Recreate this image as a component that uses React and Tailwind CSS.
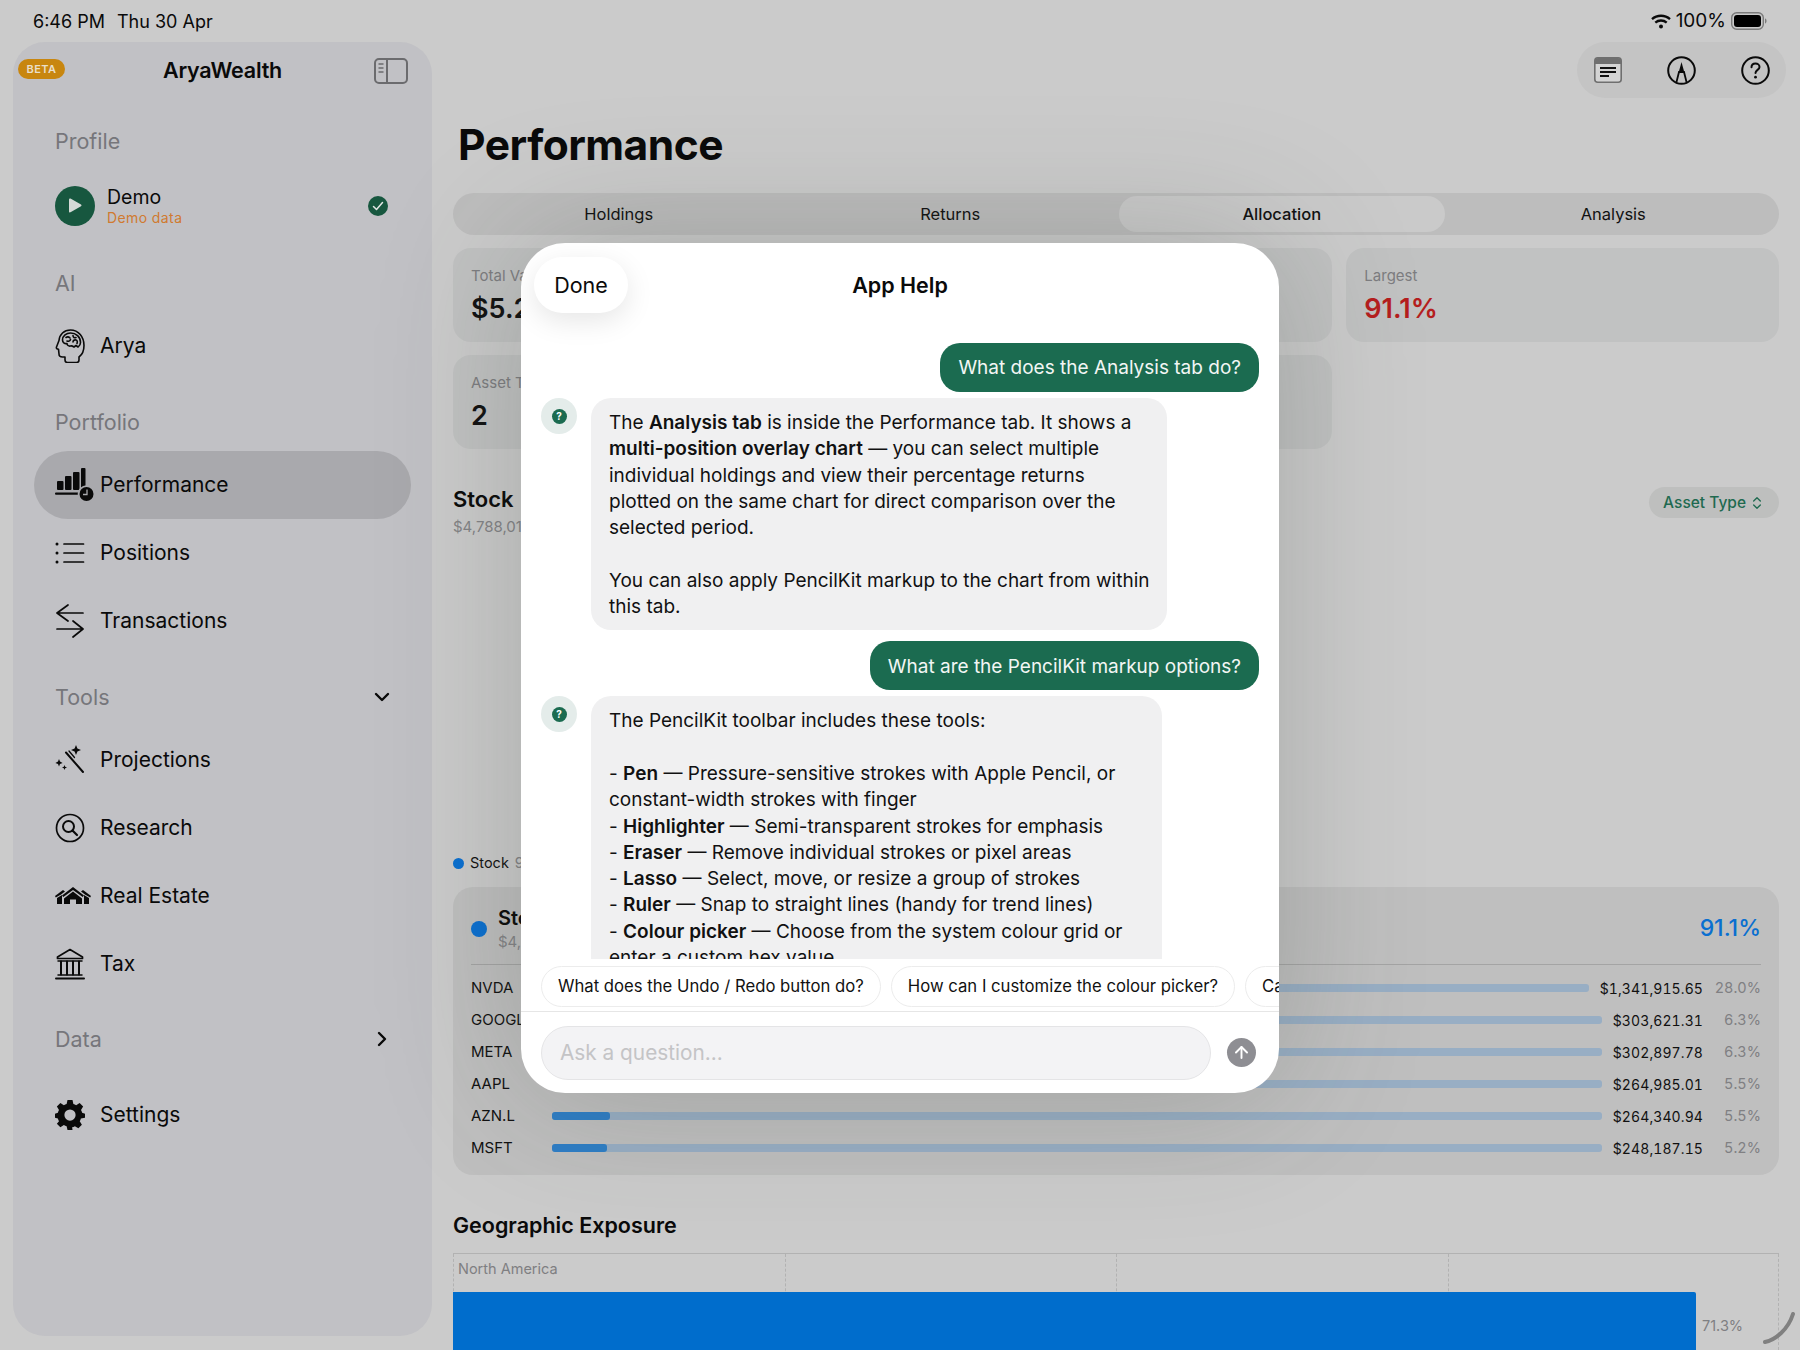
import React from 'react';
import { ArrowUp, ChevronDown, ChevronRight, ChevronsUpDown } from 'lucide-react';

const SidebarToggle = () => (
    <svg width="34" height="26" viewBox="0 0 34 26" fill="none" stroke="#6b6b6e" strokeWidth="2">
        <rect x="1" y="1" width="32" height="24" rx="4" />
        <path d="M13 1v24" />
        <path d="M4.5 6h5M4.5 10h5M4.5 14h5" strokeWidth="1.6" />
    </svg>
);

const HeadIcon = () => (
    <svg width="30" height="34" viewBox="0 0 30 34" fill="none" stroke="#0a0a0a" strokeWidth="1.6" strokeLinejoin="round" strokeLinecap="round">
        <path d="M24 28c3.500-2.500 5-6.500 5-11.500C29 8 23.500 1 15.500 1 9 1 4.500 5.500 4 11.500L1.500 18c-.5 1.500.5 2 2 2.200L4 25c0 2 1.500 3 3.500 3H10v3c0 1.500 1 2.500 2.500 2.500h9c1.500 0 2.500-1 2.500-2.500z" />
        <path d="M7.500 11c0-4.500 4-7 8-7 5.500 0 10 4 10 9.500 0 2-1 3.500-2.500 4.500l-2-1.500-2 1.500c-1.500-1-2-1.500-3.500-1-2 .5-3.500-1-3.500-2.500-2.500.5-4.500-1-4.500-3.500z" />
        <path d="M11 8.500c1.500-1 3-.5 4 .5M12 12c1.500.5 3 0 3.500-1.500M18 6.500c0 2 1.500 2.500 3 2M18 13c0-1.500 1.500-2.500 3-2 1.500.5 1.500 2 1 3.500" />
    </svg>
);

const PerformanceIcon = () => (
    <svg width="40" height="35" viewBox="0 0 40 35" fill="#0a0a0a">
        <rect x="2" y="13" width="6.500" height="9" rx="1" />
        <rect x="10" y="8" width="6.500" height="14" rx="1" />
        <rect x="18" y="4" width="6.500" height="18" rx="1" />
        <rect x="26" y="0" width="4.500" height="22" rx="1" />
        <rect x="0" y="24.500" width="24" height="2.200" rx="1" />
        <circle cx="31.500" cy="26" r="8.800" fill="#a9a9ad" />
        <circle cx="31.500" cy="26" r="7" />
        <path d="M32 21.500v5h-4" stroke="#a9a9ad" strokeWidth="1.300" fill="none" />
    </svg>
);

const ListIcon = () => (
    <svg width="30" height="22" viewBox="0 0 30 22" fill="none" stroke="#0a0a0a" strokeWidth="1.700" strokeLinecap="round">
        <path d="M9 2h19.500M9 11h19.500M9 20h19.500" />
        <circle cx="2" cy="2" r="1.500" fill="#0a0a0a" stroke="none" />
        <circle cx="2" cy="11" r="1.500" fill="#0a0a0a" stroke="none" />
        <circle cx="2" cy="20" r="1.500" fill="#0a0a0a" stroke="none" />
    </svg>
);

const TransferIcon = () => (
    <svg width="30" height="34" viewBox="0 0 30 34" fill="none" stroke="#0a0a0a" strokeWidth="1.700" strokeLinecap="round" strokeLinejoin="round">
        <path d="M28 9H2l11-8M2 9l11 8" />
        <path d="M2 25h26l-10-8M28 25l-10 8" />
    </svg>
);

const WandIcon = () => (
    <svg width="30" height="30" viewBox="0 0 30 30" fill="#0a0a0a">
        <path d="M21 0l1.400 3.600L26 5l-3.600 1.400L21 10l-1.400-3.600L16 5l3.600-1.400z" />
        <path d="M4 14l1 2.600L7.600 18 5 19l-1 2.600L3 19l-2.600-1L3 16.600z" />
        <path d="M9.500 20l.7 1.800 1.800.7-1.800.7-.7 1.800-.7-1.800-1.800-.7 1.800-.7z" />
        <path d="M11 7.500L28 27" stroke="#0a0a0a" strokeWidth="2" strokeLinecap="round" fill="none" />
        <path d="M14 6l5.500 6.500" stroke="#0a0a0a" strokeWidth="1.300" strokeLinecap="round" fill="none" />
    </svg>
);

const ResearchIcon = () => (
    <svg width="30" height="30" viewBox="0 0 30 30" fill="none" stroke="#0a0a0a" strokeWidth="1.700" strokeLinecap="round">
        <circle cx="15" cy="15" r="13.500" />
        <circle cx="13.500" cy="13.500" r="5.500" strokeWidth="2" />
        <path d="M17.500 17.500l4.500 4.500" strokeWidth="2.200" />
    </svg>
);

const HousesIcon = () => (
    <svg width="36" height="18" viewBox="0 0 36 18" fill="#0a0a0a">
        <path d="M18 0L7 8.500 8.300 10 18 3l9.700 7 1.300-1.500z" />
        <path d="M18 4.500L9 11.500V17h6v-4.500h6V17h6v-5.500z" />
        <path d="M8 3L0 9l.8 1.500L6 7.500 10 4.500z" />
        <path d="M28 3l8 6-.8 1.500L30 7.500 26 4.500z" />
        <path d="M2 11l5-3v9H2zM34 11l-5-3v9h5z" />
    </svg>
);

const BankIcon = () => (
    <svg width="30" height="32" viewBox="0 0 30 32" fill="none" stroke="#0a0a0a" strokeLinecap="round">
        <path d="M15 1.500L2.500 9v1.500h25V9z" strokeWidth="1.700" strokeLinejoin="round" />
        <path d="M3 13h24" strokeWidth="1.500" />
        <path d="M6 13.500v13M12 13.500v13M18 13.500v13M24 13.500v13" strokeWidth="2" />
        <path d="M3 27h24" strokeWidth="1.500" />
        <path d="M1 30.500h28" strokeWidth="2" />
    </svg>
);

const GearIcon = () => (
    <svg width="30" height="30" viewBox="0 0 24 24" fill="#0a0a0a" fillRule="evenodd">
        <path d="M10 0h4l.7 3.200c.8.200 1.500.5 2.200.9L19.700 2.400l2.800 2.800-1.700 2.800c.4.700.7 1.400.9 2.200L24 10.900v3.200l-3.300.7c-.2.800-.5 1.500-.9 2.200l1.700 2.800-2.800 2.800-2.800-1.700c-.7.400-1.400.7-2.200.9L14 24h-4l-.7-3.100c-.8-.2-1.500-.5-2.200-.9l-2.800 1.700-2.800-2.800L3.200 17c-.4-.7-.7-1.400-.9-2.200L0 14.100v-3.200l2.300-.7c.2-.8.5-1.500.9-2.200L1.500 5.200l2.800-2.800 2.800 1.700c.7-.4 1.400-.7 2.200-.9zM12 7.500a4.500 4.500 0 100 9 4.500 4.500 0 000-9z" />
    </svg>
);

const WifiIcon = () => (
    <svg width="20" height="15" viewBox="0 0 20 15" fill="none" stroke="#0a0a0a" strokeWidth="2.300">
        <path d="M1 5.200c5-4.600 13-4.600 18 0" />
        <path d="M4.300 8.600c3.200-2.800 8.200-2.800 11.400 0" />
        <circle cx="10" cy="12.500" r="2" fill="#0a0a0a" stroke="none" />
    </svg>
);

const BatteryIcon = () => (
    <svg width="36" height="18" viewBox="0 0 36 18">
        <rect x=".7" y=".7" width="31.600" height="16.600" rx="5" fill="none" stroke="#7b7b7b" strokeWidth="1.400" />
        <rect x="3" y="3" width="27" height="12" rx="3" fill="#000" />
        <path d="M34 6.500c1 .3 1.500 1.200 1.500 2.500s-.5 2.200-1.500 2.500z" fill="#7b7b7b" />
    </svg>
);

const NotesIcon = () => (
    <svg width="28" height="26" viewBox="0 0 28 26" fill="none">
        <rect x=".8" y=".8" width="26.400" height="24.400" rx="3" fill="#d4d4d4" stroke="#6f6f6f" strokeWidth="1.600" />
        <path d="M1 4a3 3 0 013-3h20a3 3 0 013 3v3H1z" fill="#6f6f6f" />
        <path d="M6 11h16M6 15h16M6 19h9" stroke="#111" strokeWidth="1.800" />
    </svg>
);

const MarkupIcon = () => (
    <svg width="29" height="29" viewBox="0 0 29 29" fill="none" stroke="#0a0a0a" strokeWidth="2">
        <circle cx="14.500" cy="14.500" r="13.300" />
        <path d="M9.500 26l2.500-10h5l2.500 10" strokeWidth="1.800" />
        <path d="M14.500 6l-3 11h6z" fill="#0a0a0a" stroke="none" />
    </svg>
);

const HelpIcon = () => (
    <svg width="29" height="29" viewBox="0 0 29 29" fill="none" stroke="#0a0a0a" strokeWidth="2" strokeLinecap="round">
        <circle cx="14.500" cy="14.500" r="13.300" />
        <path d="M10.500 11.200c0-2.300 1.800-3.700 4-3.700s4 1.400 4 3.400c0 3-4 3-4 6.200" />
        <circle cx="14.500" cy="21.200" r="1.400" fill="#0a0a0a" stroke="none" />
    </svg>
);

const Label = ({ className = '', children }) => (
    <div className={`h-[30px] pl-[42px] flex items-center text-[21.500px] text-[#76767b] ${className}`}>{children}</div>
);

const NavRow = ({ icon, label, active, className = '' }) => (
    <div className={`h-[68px] mx-[21px] pl-[21px] flex items-center rounded-full text-[21px] text-[#0a0a0a] ${active ? 'bg-[#a9a9ad]' : ''} ${className}`}>
        <div className="w-[45px] shrink-0 flex items-center">{icon}</div>
        {label}
    </div>
);

const Sidebar = () => (
    <aside className="w-[419px] shrink-0 mb-[14px] rounded-[32px] bg-[#c1c1c5]">
        <div className="h-[58px] grid grid-cols-[1fr_auto_1fr] items-center">
            <div className="flex">
                <span className="ml-[5px] mb-[4px] flex h-[20px] w-[47px] items-center justify-center rounded-full bg-[#c8860f] text-[11px] font-semibold tracking-[0.5px] text-[#eadfc9]">BETA</span>
            </div>
            <div className="pb-[1px] text-[21.500px] font-semibold text-[#0a0a0a] tracking-[-0.2px]">AryaWealth</div>
            <div className="flex justify-end pr-[24px]"><SidebarToggle /></div>
        </div>

        <Label className="mt-[26px]">Profile</Label>
        <div className="mt-[29px] pl-[42px] pr-[44px] flex items-center">
            <div className="w-[40px] h-[40px] rounded-full bg-[#17573f] flex items-center justify-center">
                <svg width="14" height="15" viewBox="0 0 14 15"><path d="M1 1.500c0-1 .8-1.300 1.500-.9l10.500 6c.7.400.7 1.300 0 1.700l-10.500 6c-.7.400-1.500 0-1.500-.9z" fill="#d5dad7" /></svg>
            </div>
            <div className="ml-[12px] flex-1">
                <div className="text-[19.500px] leading-[24px] text-[#0a0a0a]">Demo</div>
                <div className="text-[14px] leading-[17px] tracking-[0.4px] text-[#d07a30]">Demo data</div>
            </div>
            <div className="w-[20px] h-[20px] rounded-full bg-[#17573f] flex items-center justify-center">
                <svg width="12" height="10" viewBox="0 0 12 10" fill="none" stroke="#e2e6e4" strokeWidth="1.500" strokeLinecap="round" strokeLinejoin="round"><path d="M1.500 5.500L4.500 8.500 10.500 1.500" /></svg>
            </div>
        </div>

        <Label className="mt-[42px]">AI</Label>
        <NavRow className="mt-[14px]" icon={<HeadIcon />} label="Arya" />

        <Label className="mt-[27px]">Portfolio</Label>
        <NavRow className="mt-[14px]" icon={<PerformanceIcon />} label="Performance" active />
        <NavRow icon={<ListIcon />} label="Positions" />
        <NavRow icon={<TransferIcon />} label="Transactions" />

        <div className="mt-[27px] h-[30px] pl-[42px] pr-[38px] flex items-center justify-between text-[21.500px] text-[#76767b]">
            Tools
            <ChevronDown size={24} color="#0a0a0a" strokeWidth={2.4} />
        </div>
        <NavRow className="mt-[14px]" icon={<WandIcon />} label="Projections" />
        <NavRow icon={<ResearchIcon />} label="Research" />
        <NavRow icon={<HousesIcon />} label="Real Estate" />
        <NavRow icon={<BankIcon />} label="Tax" />

        <div className="mt-[26px] h-[30px] pl-[42px] pr-[38px] flex items-center justify-between text-[21.500px] text-[#76767b]">
            Data
            <ChevronRight size={24} color="#0a0a0a" strokeWidth={2.4} />
        </div>
        <NavRow className="mt-[27px]" icon={<GearIcon />} label="Settings" />
    </aside>
);

const Tab = ({ label, active }) => (
    <div className="flex-1 px-[3px]">
        <div className={`h-[36px] flex items-center justify-center rounded-full text-[16.500px] text-[#111] ${active ? 'bg-[#cacaca] font-medium' : ''}`}>{label}</div>
    </div>
);

const StatCard = ({ label, value, valueClass = 'text-[#111]' }) => (
    <div className="h-[94px] rounded-[18px] bg-[#c1c2c2] pt-[19px] pl-[18px] overflow-hidden whitespace-nowrap">
        <div className="text-[15px] leading-[18px] text-[#7d7d80]">{label}</div>
        <div className={`mt-[7px] text-[27px] leading-[34px] font-semibold ${valueClass}`}>{value}</div>
    </div>
);

const holdings = [
    { sym: 'NVDA', value: '$1,341,915.65', pct: 28.0 },
    { sym: 'GOOGL', value: '$303,621.31', pct: 6.3 },
    { sym: 'META', value: '$302,897.78', pct: 6.3 },
    { sym: 'AAPL', value: '$264,985.01', pct: 5.5 },
    { sym: 'AZN.L', value: '$264,340.94', pct: 5.5 },
    { sym: 'MSFT', value: '$248,187.15', pct: 5.2 },
];

const HoldingRow = ({ sym, value, pct }) => (
    <div className="h-[32px] flex items-center text-[14px] text-[#111]">
        <div className="w-[81px] shrink-0 text-[15px]">{sym}</div>
        <div className="flex-1 h-[8px] rounded-[3px] bg-[#98aec4]">
            <div className="h-full rounded-[3px] bg-[#2e7ec6]" style={{ width: `${pct}%` }} />
        </div>
        <div className="ml-[11px] tabular-nums tracking-[0.1px]">{value}</div>
        <div className="w-[58px] shrink-0 text-right text-[14.500px] text-[#808083] tabular-nums">{pct.toFixed(1)}%</div>
    </div>
);

const Main = () => (
    <main className="flex-1 min-w-0 ml-[21px] mr-[21px] flex flex-col">
        <div className="h-[56px] shrink-0 flex justify-end -mr-[7px]">
            <div className="w-[209px] h-[56px] rounded-full bg-[#c4c4c4] flex items-center justify-between pl-[17px] pr-[16px]">
                <NotesIcon /><MarkupIcon /><HelpIcon />
            </div>
        </div>

        <h1 className="mt-[21px] ml-[5px] text-[42.500px] leading-[52px] font-bold text-[#0a0a0a] tracking-[-0.5px]">Performance</h1>

        <div className="mt-[22px] h-[42px] shrink-0 rounded-full bg-[#bdbdbd] flex items-center">
            <Tab label="Holdings" />
            <Tab label="Returns" />
            <Tab label="Allocation" active />
            <Tab label="Analysis" />
        </div>

        <div className="mt-[13px] grid grid-cols-3 gap-x-[14px] gap-y-[13px]">
            <StatCard label="Total Value" value="$5.26M" />
            <div className="h-[94px] rounded-[18px] bg-[#c1c2c2]" />
            <StatCard label="Largest" value="91.1%" valueClass="text-[#b51e1e]" />
            <StatCard label="Asset Types" value="2" />
            <div className="h-[94px] rounded-[18px] bg-[#c1c2c2]" />
        </div>

        <div className="mt-[35px] flex items-start justify-between h-[369px] shrink-0">
            <div className="whitespace-nowrap">
                <div className="text-[22px] leading-[31px] font-semibold text-[#0a0a0a]">Stock</div>
                <div className="mt-[2px] text-[15px] leading-[20px] text-[#838386]">$4,788,012</div>
            </div>
            <div className="mt-[3px] h-[31px] px-[14px] rounded-full bg-[#bebfbe] flex items-center gap-[3px] text-[15.500px] font-medium text-[#1f6a50]">
                Asset Type
                <ChevronsUpDown size={16} strokeWidth={2} />
            </div>
        </div>

        <div className="h-[20px] flex items-center gap-[6px] text-[14.500px] text-[#111]">
            <span className="w-[11px] h-[11px] rounded-full bg-[#0a6fd0]" />
            Stock
            <span className="text-[#838386]">91.1%</span>
        </div>

        <section className="mt-[14px] h-[288px] shrink-0 rounded-[20px] bg-[#bfbfbf] px-[18px]">
            <div className="h-[78px] pt-[6px] flex items-center border-b border-[#a4a4a4]">
                <span className="w-[16px] h-[16px] rounded-full bg-[#0a6fd0]" />
                <div className="ml-[11px] flex-1">
                    <div className="text-[20px] leading-[26px] font-semibold text-[#0a0a0a]">Stock</div>
                    <div className="text-[15px] leading-[21px] text-[#838386]">$4,788,012</div>
                </div>
                <div className="text-[23px] font-medium text-[#0a6fd0]">91.1%</div>
            </div>
            <div className="mt-[7px]">
                {holdings.map(h => <HoldingRow key={h.sym} {...h} />)}
            </div>
        </section>

        <h2 className="mt-[36px] text-[21.500px] leading-[28px] font-semibold text-[#0a0a0a]">Geographic Exposure</h2>

        <div className="mt-[14px] flex-1 min-h-0 border-t border-[#b2b2b2] grid grid-cols-4 relative">
            <div className="border-l border-dashed border-[#b2b2b2] pl-[4px] pt-[5px] text-[14.500px] leading-[20px] text-[#7f7f82]">North America</div>
            <div className="border-l border-dashed border-[#b2b2b2]" />
            <div className="border-l border-dashed border-[#b2b2b2]" />
            <div className="border-l border-r border-dashed border-[#b2b2b2]" />
            {/* bar sits over the dashed grid */}
            <div className="absolute left-0 top-[38px] bottom-0 right-0 flex items-start">
                <div className="w-[1243px] h-full bg-[#006dcc] rounded-tr-[2px]" />
                <div className="ml-[6px] mt-[24px] text-[14.500px] leading-[20px] text-[#7f7f82]">71.3%</div>
            </div>
        </div>
    </main>
);

const UserBubble = ({ children, className = '' }) => (
    <div className={`self-end shrink-0 h-[49px] pt-[2px] px-[18px] rounded-[20px] bg-[#1b6b50] flex items-center text-[19px] text-[#f2f6f4] whitespace-nowrap ${className}`}>{children}</div>
);

const Avatar = () => (
    <div className="w-[36px] h-[36px] shrink-0 rounded-full bg-[#e4ecea] flex items-center justify-center">
        <div className="w-[15px] h-[15px] rounded-full bg-[#1b6b50] flex items-center justify-center text-[10px] font-bold leading-none text-white">?</div>
    </div>
);

const BotBubble = ({ width, className = '', children }) => (
    <div className={`flex items-start gap-[14px] shrink-0 ${className}`}>
        <Avatar />
        <div className={`${width} shrink-0 rounded-[20px] bg-[#f0f0f1] px-[18px] pt-[12px] pb-[10px] text-[19px] leading-[26.300px] text-[#111] whitespace-nowrap`}>{children}</div>
    </div>
);

const Chip = ({ children }) => (
    <div className="h-[41px] px-[16px] shrink-0 rounded-full bg-white border border-[#ececec] flex items-center text-[16.700px] text-[#111] whitespace-nowrap">{children}</div>
);

const HelpModal = () => (
    <div className="absolute left-[521px] top-[243px] w-[758px] h-[850px] rounded-[44px] bg-white overflow-hidden flex flex-col [box-shadow:0_0_140px_rgba(60,70,60,0.26)]">
        <div className="h-[100px] shrink-0 relative flex justify-center pt-[14px]">
            <div className="h-[56px] flex items-center text-[21.500px] font-semibold text-[#0a0a0a]">App Help</div>
            <div className="absolute left-[13px] top-[14px] w-[94px] h-[56px] rounded-[28px] bg-white [box-shadow:0_8px_28px_rgba(0,0,0,0.10)] flex items-center justify-center text-[21.500px] text-[#0a0a0a]">Done</div>
        </div>

        <div className="flex-1 min-h-0 overflow-hidden px-[20px] flex flex-col items-stretch">
            <UserBubble>What does the Analysis tab do?</UserBubble>
            <BotBubble width="w-[576px]" className="mt-[6px]">
                The <b className="font-semibold">Analysis tab</b> is inside the Performance tab. It shows a<br />
                <b className="font-semibold">multi-position overlay chart</b> — you can select multiple<br />
                individual holdings and view their percentage returns<br />
                plotted on the same chart for direct comparison over the<br />
                selected period.<br />
                <br />
                You can also apply PencilKit markup to the chart from within<br />
                this tab.
            </BotBubble>
            <UserBubble className="mt-[11px]">What are the PencilKit markup options?</UserBubble>
            <BotBubble width="w-[571px]" className="mt-[6px]">
                The PencilKit toolbar includes these tools:<br />
                <br />
                - <b className="font-semibold">Pen</b> — Pressure-sensitive strokes with Apple Pencil, or<br />
                constant-width strokes with finger<br />
                - <b className="font-semibold">Highlighter</b> — Semi-transparent strokes for emphasis<br />
                - <b className="font-semibold">Eraser</b> — Remove individual strokes or pixel areas<br />
                - <b className="font-semibold">Lasso</b> — Select, move, or resize a group of strokes<br />
                - <b className="font-semibold">Ruler</b> — Snap to straight lines (handy for trend lines)<br />
                - <b className="font-semibold">Colour picker</b> — Choose from the system colour grid or<br />
                enter a custom hex value
            </BotBubble>
        </div>

        <div className="h-[53px] shrink-0 pl-[20px] pt-[7px] flex gap-[10px] overflow-hidden border-b border-[#e6e6e6]">
            <Chip>What does the Undo / Redo button do?</Chip>
            <Chip>How can I customize the colour picker?</Chip>
            <Chip>Can I save my markup?</Chip>
        </div>

        <div className="h-[81px] shrink-0 pl-[20px] pr-[23px] flex items-center justify-between">
            <div className="w-[670px] h-[54px] rounded-[27px] bg-[#f3f3f5] border border-[#e4e4e6] pl-[18px] flex items-center text-[20.800px] text-[#c4c4c6]">Ask a question...</div>
            <div className="w-[29px] h-[29px] rounded-full bg-[#8e8e93] flex items-center justify-center">
                <ArrowUp size={19} color="#fff" strokeWidth={2.4} />
            </div>
        </div>
    </div>
);

const App = () => (
    <div className="relative w-[1800px] h-[1350px] overflow-hidden bg-[#cbcbcb] flex flex-col [font-family:Inter,sans-serif]">
        <div className="h-[42px] shrink-0 pl-[33px] pr-[33px] flex items-center justify-between text-[18px] text-[#0a0a0a]">
            <div className="flex gap-[12px]"><span>6:46 PM</span><span>Thu 30 Apr</span></div>
            <div className="flex items-center gap-[5px]">
                <WifiIcon />
                <span className="text-[19px]">100%</span>
                <BatteryIcon />
            </div>
        </div>
        <div className="flex-1 min-h-0 flex pl-[13px]">
            <Sidebar />
            <Main />
        </div>
        <HelpModal />
        {/* home indicator corner */}
        <svg className="absolute left-[1760px] top-[1310px]" width="38" height="36" viewBox="0 0 38 36" fill="none">
            <path d="M5 32C15 30 28 20 33 4" stroke="#808080" strokeWidth="4" strokeLinecap="round" />
        </svg>
    </div>
);

export default App;
